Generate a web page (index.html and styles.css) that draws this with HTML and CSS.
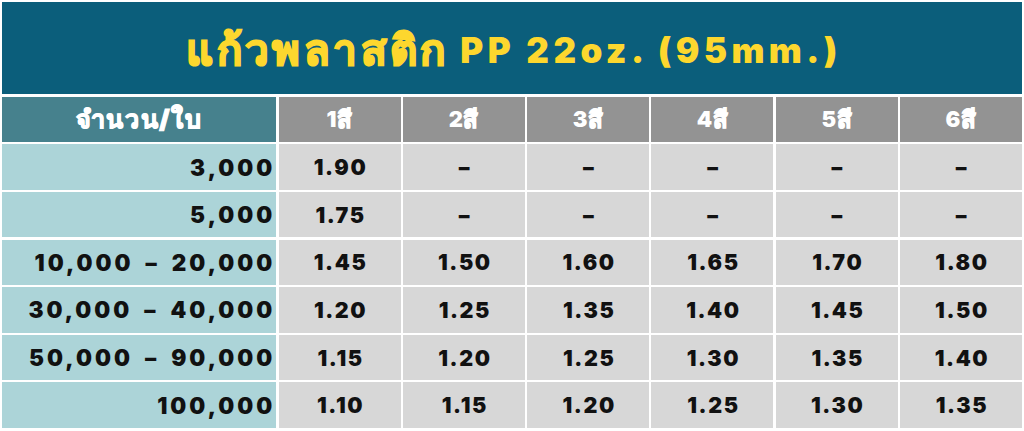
FILE: index.html
```html
<!DOCTYPE html>
<html lang="th">
<head>
<meta charset="utf-8">
<title>แก้วพลาสติก PP 22oz. (95mm.)</title>
<link rel="stylesheet" href="styles.css">
</head>
<body>
<div class="sheet">
  <div class="title"><span class="th">แก้วพลาสติก</span>&nbsp;PP 22oz. (95mm.)</div>

  <div class="hd hd-qty"><span class="th">จำนวน/ใบ</span></div>
  <div class="hd">1<span class="th">สี</span></div>
  <div class="hd">2<span class="th">สี</span></div>
  <div class="hd">3<span class="th">สี</span></div>
  <div class="hd">4<span class="th">สี</span></div>
  <div class="hd">5<span class="th">สี</span></div>
  <div class="hd">6<span class="th">สี</span></div>

  <div class="qty">3,000</div>
  <div class="cell">1.90</div>
  <div class="cell">–</div>
  <div class="cell">–</div>
  <div class="cell">–</div>
  <div class="cell">–</div>
  <div class="cell">–</div>

  <div class="qty">5,000</div>
  <div class="cell">1.75</div>
  <div class="cell">–</div>
  <div class="cell">–</div>
  <div class="cell">–</div>
  <div class="cell">–</div>
  <div class="cell">–</div>

  <div class="qty">10,000 – 20,000</div>
  <div class="cell">1.45</div>
  <div class="cell">1.50</div>
  <div class="cell">1.60</div>
  <div class="cell">1.65</div>
  <div class="cell">1.70</div>
  <div class="cell">1.80</div>

  <div class="qty">30,000 – 40,000</div>
  <div class="cell">1.20</div>
  <div class="cell">1.25</div>
  <div class="cell">1.35</div>
  <div class="cell">1.40</div>
  <div class="cell">1.45</div>
  <div class="cell">1.50</div>

  <div class="qty">50,000 – 90,000</div>
  <div class="cell">1.15</div>
  <div class="cell">1.20</div>
  <div class="cell">1.25</div>
  <div class="cell">1.30</div>
  <div class="cell">1.35</div>
  <div class="cell">1.40</div>

  <div class="qty">100,000</div>
  <div class="cell">1.10</div>
  <div class="cell">1.15</div>
  <div class="cell">1.20</div>
  <div class="cell">1.25</div>
  <div class="cell">1.30</div>
  <div class="cell">1.35</div>
</div>
</body>
</html>
```

FILE: styles.css
```css
html, body {
  margin: 0;
  padding: 0;
  background: #ffffff;
}

body {
  padding: 2px;
  font-family: "Inter", "Noto Sans", sans-serif;
}

.sheet {
  display: grid;
  width: 1020px;
  grid-template-columns: 274.3px repeat(6, 1fr);
  grid-template-rows: 92.3px 45.6px repeat(6, 45.3px);
  gap: 2.3px;
}

.th {
  -webkit-text-stroke: 1.1px currentColor;
}

.title {
  grid-column: 1 / -1;
  background: #0b5e7b;
  color: #fdd72e;
  font-size: 35px;
  font-weight: 900;
  display: flex;
  align-items: center;
  justify-content: center;
  padding-top: 4px;
  padding-left: 4px;
  letter-spacing: 4.4px;
}

.title .th {
  font-size: 42px;
  letter-spacing: 3.4px;
  -webkit-text-stroke: 1.8px currentColor;
}

.hd {
  background: #939393;
  color: #ffffff;
  font-size: 22px;
  font-weight: 900;
  display: flex;
  align-items: center;
  justify-content: center;
  letter-spacing: 0.5px;
}

.hd .th {
  font-size: 24px;
}

.hd-qty {
  background: #46818d;
}

.hd-qty .th {
  font-size: 25px;
  letter-spacing: 1.6px;
}

.qty {
  background: #acd4d8;
  color: #111111;
  font-size: 22.5px;
  font-weight: 900;
  display: flex;
  align-items: center;
  justify-content: flex-end;
  padding-right: 1px;
  letter-spacing: 3px;
  word-spacing: 4.5px;
}

.cell {
  background: #d7d7d7;
  color: #111111;
  font-size: 21.5px;
  font-weight: 900;
  display: flex;
  align-items: center;
  justify-content: center;
  letter-spacing: 1.6px;
  padding-left: 2px;
}
```
